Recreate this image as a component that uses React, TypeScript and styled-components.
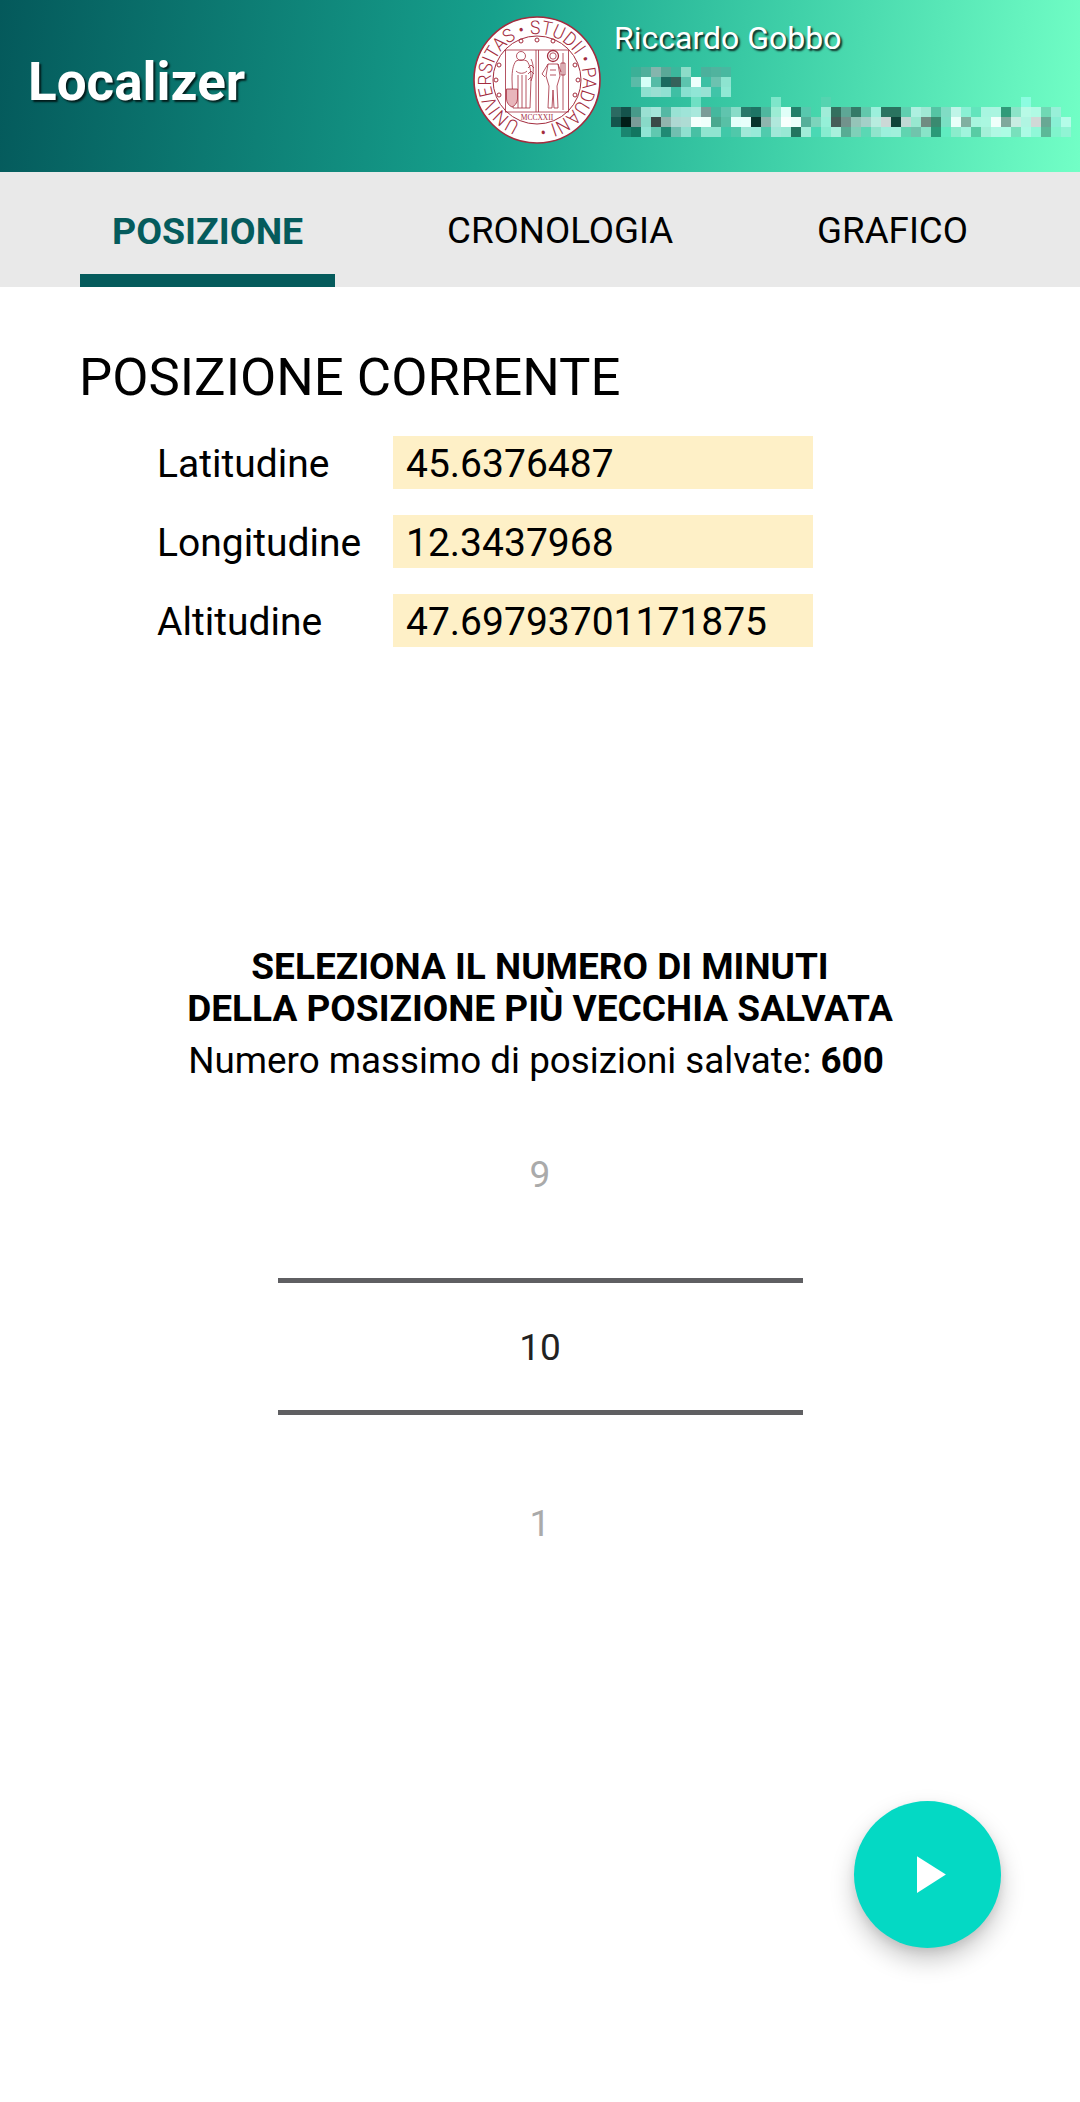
import styled, { createGlobalStyle } from 'styled-components'

const GlobalStyle = createGlobalStyle`
  html, body {
    margin: 0;
    padding: 0;
    background: #fff;
  }
  body {
    font-family: Roboto, "Liberation Sans", sans-serif;
    color: #000;
  }
`

const Page = styled.div`
  position: relative;
  width: 1080px;
  height: 2102px;
  overflow: hidden;
  background: #fff;
`

const Header = styled.header`
  height: 172px;
  display: flex;
  align-items: flex-start;
  padding-left: 28px;
  background: linear-gradient(97deg, #04595b 0%, #16a08c 45%, #3fd0a8 72%, #72ffc6 100%);
`

const AppTitle = styled.h1`
  margin: 51px 0 0;
  width: 444px;
  flex: none;
  font-size: 53px;
  line-height: 62px;
  font-weight: 700;
  color: #fff;
  text-shadow: 2px 2px 2px rgba(0, 0, 0, 0.75);
`

const Account = styled.div`
  flex: 1;
  height: 172px;
  display: flex;
  align-items: flex-start;
`

const Seal = styled.svg`
  flex: none;
  width: 130px;
  height: 130px;
  margin-top: 15px;
`

const AccountInfo = styled.div`
  padding: 16px 0 0 12px;
`

const UserName = styled.div`
  font-size: 32px;
  line-height: 44px;
  color: #fff;
  text-shadow: 2px 2px 2px rgba(0, 0, 0, 0.8);
`

const Mosaic = styled.svg`
  display: block;
  width: 460px;
  height: 70px;
  margin: 7px 0 0 -3px;
`

const TabBar = styled.nav`
  height: 115px;
  display: flex;
  justify-content: space-between;
  padding: 0 80px;
  background: #e9e9e9;
`

const Tab = styled.div<{ $active?: boolean }>`
  display: flex;
  align-items: center;
  padding: 15px 32px 0;
  font-size: ${({ $active }) => ($active ? '37.5px' : '36.7px')};
  font-weight: ${({ $active }) => ($active ? 700 : 400)};
  color: ${({ $active }) => ($active ? '#055b5c' : '#000')};
  border-bottom: 13px solid ${({ $active }) => ($active ? '#055b5c' : 'transparent')};
`

const Section = styled.section`
  padding: 60px 0 0 79px;
`

const SectionTitle = styled.h2`
  margin: 0;
  font-size: 52.7px;
  line-height: 60px;
  font-weight: 400;
`

const Fields = styled.div`
  display: grid;
  grid-template-columns: 236px 420px;
  grid-auto-rows: 53px;
  row-gap: 26px;
  margin: 29px 0 0 78px;
`

const FieldLabel = styled.div`
  display: flex;
  align-items: center;
  padding-top: 3px;
  font-size: 39px;
`

const FieldValue = styled.div`
  display: flex;
  align-items: center;
  padding: 3px 0 0 13px;
  font-size: 39px;
  background: #fef0c7;
`

const Selector = styled.section`
  margin-top: 299px;
  display: flex;
  flex-direction: column;
  align-items: center;
`

const SelectorTitle = styled.h3`
  margin: 0;
  font-size: 37px;
  line-height: 42px;
  font-weight: 700;
  text-align: center;
`

const SelectorHint = styled.p`
  margin: 8px 0 0;
  padding-right: 8px;
  font-size: 36.8px;
  line-height: 46px;
  text-align: center;
`

const Picker = styled.div`
  width: 525px;
  display: flex;
  flex-direction: column;
`

const PickerItem = styled.div<{ $above?: boolean }>`
  height: 194px;
  box-sizing: border-box;
  display: flex;
  align-items: ${({ $above }) => ($above ? 'flex-end' : 'flex-start')};
  justify-content: center;
  padding: ${({ $above }) => ($above ? '0 0 82px' : '88px 0 0')};
  font-size: 37px;
  color: #aaa;
`

const PickerSelected = styled.div`
  height: 126px;
  display: flex;
  align-items: center;
  justify-content: center;
  padding-top: 1px;
  box-sizing: content-box;
  font-size: 37px;
  color: #222;
  border-top: 5px solid #5f5f62;
  border-bottom: 5px solid #5f5f62;
  margin-bottom: -1px;
`

const Fab = styled.button`
  position: absolute;
  left: 854px;
  top: 1801px;
  width: 147px;
  height: 147px;
  padding: 0;
  border: 0;
  border-radius: 50%;
  display: flex;
  align-items: center;
  justify-content: center;
  background: #04d9c4;
  box-shadow: 0 12px 24px rgba(0, 0, 0, 0.22), 0 4px 8px rgba(0, 0, 0, 0.08);
`

// pixelated part of the header, 10px cells, '.' means nothing over the gradient
const MOSAIC_ROWS = [
  '. . #3bb097 #4eb09c #85b5ad #5aa898 #3cb79c #8ddcc8 . #4cb09c #50b39e #48b8a0',
  '. . #5abba8 #d5fff8 #55bba6 #1b6a60 #35625a #5cc4ae #eefffc #3cc0a4 #6cc2b0 #8de4d0',
  '. . . #8ee0d0 #9adfd2 #90e0d2 #3fbfa4 #88e0d0 #90e6d6 #98e2d4 #40c4a8 #90e8d4',
  '. . . . . . . . #6fe0c4 . . . . . . . #7ee6ca . . . . #55d4b0 . . . . . . . . . . . . . . . . . . . #8cfce0',
  '#2b6a62 #15534c #479a8a #9ae0d2 #a5e6da #55b8a4 #99e2d4 #9fe4d8 #a8e8dc #7a9c98 #45b89e #60c4ae #88dcc8 #28796a #1e7565 #4fb79f #9cecd4 #e0fff8 #22806a #58c8ae . #a0ecd8 #34705f #5ea796 #347a68 #62c8ac #9cf0dc #2a7460 #2a7460 #60cfb0 #aef0e0 #a0e8d4 #55c4a4 #80dcc4 #bff5e8 #8af0d4 #62e4bc #a8f5e0 #aaf5e0 #309a78 #8ce4c8 #b8fae6 #b0fae4 #70d8b4 #98f0d8',
  '#14554d #021d18 #7a9c98 #88dac8 #3a4a48 #92b4ae #aed8d2 #aedcd4 #f6fffd #f0fffc #4aa88f #58c0a6 #e4fffa #e8fffb #08342c #8fb5ae #b0e8dc #f8fffd #ecfffb #55b09a #7cd4bc #95f0d8 #465d58 #72928c #95c4b8 #a4d0c8 #b8ecdf #ccd8d6 #10443a #c0d8d4 #98e8d0 #708c82 #3a8a70 #7ae0c4 #e8fff9 #80b0a0 #a8f5de #aaf7e0 #f0fffb #80a89c #c8ece2 #b0f5e2 #d0d8d6 #68a894 #88f0d4 #b4fce8',
  '. #1a8570 #127560 #90e4d4 #60c8b0 #208a74 #70bfb0 #90e0d0 #48c0a4 #90e4d0 #90e4d0 #40c8a8 #50c8aa #a0e8d8 #98ead8 #50cbad #a0e8d8 #98e8d4 #237560 #a0ecd8 #4ad8b4 #88ecd0 #a8f0dc #58ac94 #7ed0b8 #5ad8b4 #90e4cc #9cf0dc #a0f0dc #60d4b0 #70c4ac #88e4c8 #2a9a78 #60ecc0 #8aeccc #a0f4dc #58cca4 #a4f0d8 #b0f8e4 #acfce4 #78e0bc #acfae4 #90f8d8 #5cb898 #80f4cc #90f4d4',
]

const ROSETTES = [
  [49, 26],
  [65, 25],
  [81, 26],
  [27, 50],
  [24, 65],
  [27, 80],
  [103, 50],
  [106, 65],
  [103, 80],
]

function UniversitySeal() {
  const red = '#a32c3e'
  return (
    <Seal viewBox="0 0 130 130">
      <defs>
        <path id="sealRing" d="M 65 111 A 46 46 0 1 1 65.01 111" />
      </defs>
      <circle cx="65" cy="65" r="63" fill="#fff" stroke={red} strokeWidth="1.6" />
      <circle cx="65" cy="65" r="44" fill="none" stroke={red} strokeWidth="1" />
      <text fontFamily="Roboto, Liberation Sans, sans-serif" fontWeight="300" fontSize="19" fill={red}>
        <textPath href="#sealRing" startOffset="6%" textLength="268" lengthAdjust="spacingAndGlyphs">
          UNIVERSITAS • STUDII • PADUANI •
        </textPath>
      </text>
      {ROSETTES.map(([x, y]) => (
        <circle key={`${x}-${y}`} cx={x} cy={y} r="2" fill="none" stroke={red} strokeWidth="1" />
      ))}
      <g fill="none" stroke={red} strokeWidth="0.8">
        <rect x="33.5" y="35" width="63" height="62" />
        <path d="M64 35V97M66.5 35V97" />
        {/* left figure with palm and shield */}
        <circle cx="49" cy="41" r="4.5" />
        <path d="M44 46c-3 4-4 10-4 18l1 29h17l1-29c0-8-1-14-4-18-3-1.500-8-1.500-11 0z" />
        <path d="M44 56c3 3 8 3 11 0M46 60v33M50 60v33M54 60v33" />
        <path d="M59 44c3 6 3 14 0 22M59 50l-3 3M59 50l3 3M59 56l-3 3M59 56l3 3M59 62l-3 3" />
        <path d="M34.500 74h11v10c0 4-3 7-5.500 8-2.500-1-5.500-4-5.500-8z" fill="#e8b5bb" />
        {/* right figure with staff */}
        <circle cx="81" cy="41" r="5.500" strokeWidth="1.300" />
        <circle cx="81" cy="41" r="3.200" />
        <path d="M76 49h10l2 12-3 10 1 22h-4l-1-18-1 18h-4l1-22-3-10z" />
        <path d="M76 49l-6 10 3 3M86 49l3 8M78 55h6M78 60h6" />
        <path d="M91 38v57M89 48h4v12h-4z" />
      </g>
      <text x="65" y="105" textAnchor="middle" fontFamily="Liberation Serif, serif" fontSize="7.500" fill={red}>
        MCCXXII
      </text>
    </Seal>
  )
}

export default function App() {
  return (
    <Page>
      <GlobalStyle />
      <Header>
        <AppTitle>Localizer</AppTitle>
        <Account>
          <UniversitySeal />
          <AccountInfo>
            <UserName>Riccardo Gobbo</UserName>
            <Mosaic viewBox="0 0 460 70">
              {MOSAIC_ROWS.map((row, y) =>
                row.split(' ').map((color, x) =>
                  color === '.' ? null : (
                    <rect key={`${x}-${y}`} x={x * 10} y={y * 10} width="10" height="10" fill={color} />
                  ),
                ),
              )}
            </Mosaic>
          </AccountInfo>
        </Account>
      </Header>

      <TabBar>
        <Tab $active>POSIZIONE</Tab>
        <Tab>CRONOLOGIA</Tab>
        <Tab>GRAFICO</Tab>
      </TabBar>

      <Section>
        <SectionTitle>POSIZIONE CORRENTE</SectionTitle>
        <Fields>
          <FieldLabel>Latitudine</FieldLabel>
          <FieldValue>45.6376487</FieldValue>
          <FieldLabel>Longitudine</FieldLabel>
          <FieldValue>12.3437968</FieldValue>
          <FieldLabel>Altitudine</FieldLabel>
          <FieldValue>47.69793701171875</FieldValue>
        </Fields>
      </Section>

      <Selector>
        <SelectorTitle>
          SELEZIONA IL NUMERO DI MINUTI
          <br />
          DELLA POSIZIONE PIÙ VECCHIA SALVATA
        </SelectorTitle>
        <SelectorHint>
          Numero massimo di posizioni salvate: <b>600</b>
        </SelectorHint>
        <Picker>
          <PickerItem $above>9</PickerItem>
          <PickerSelected>10</PickerSelected>
          <PickerItem>1</PickerItem>
        </Picker>
      </Selector>

      <Fab aria-label="Avvia">
        <svg width="63" height="63" viewBox="0 0 24 24" fill="#fff">
          <path d="M8 5v14l11-7z" />
        </svg>
      </Fab>
    </Page>
  )
}
